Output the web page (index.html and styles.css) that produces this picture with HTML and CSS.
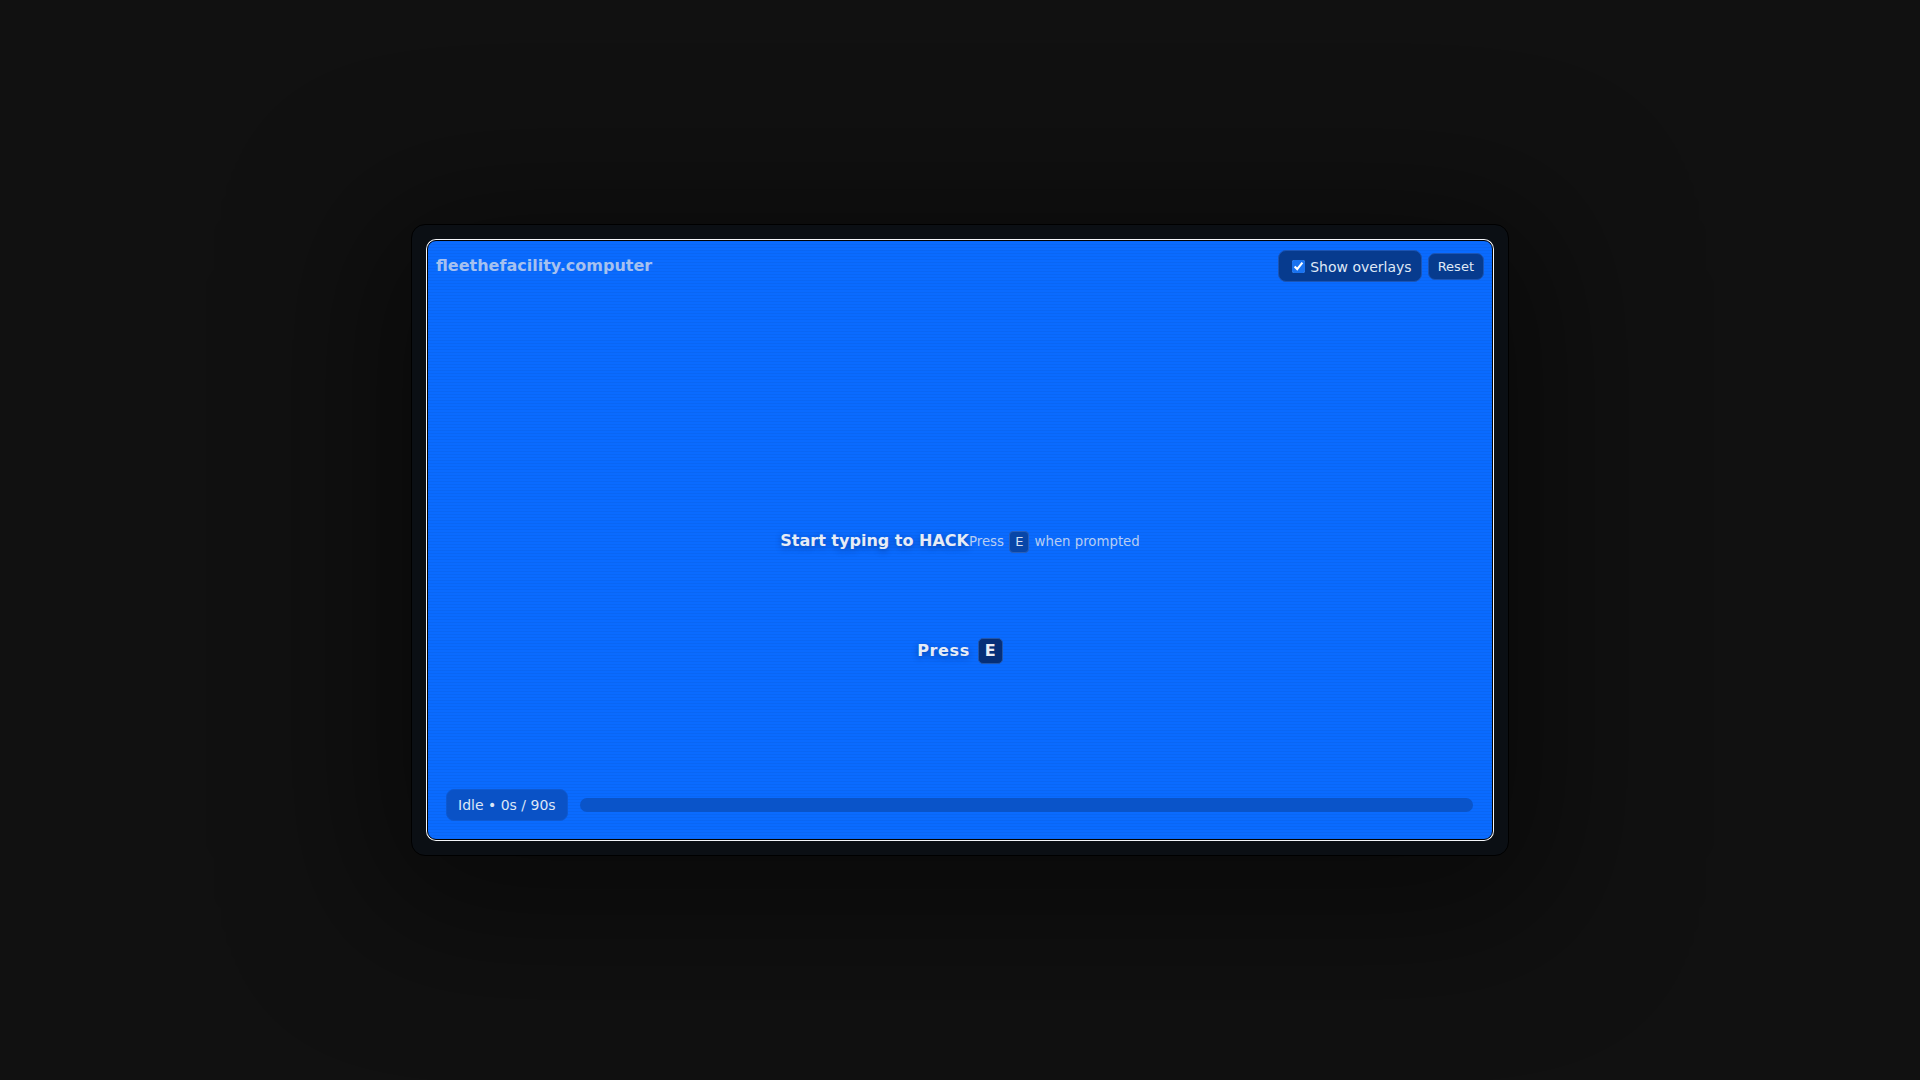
FILE: index.html
```html
<!DOCTYPE html>
<html lang="en">
<head>
<meta charset="utf-8">
<title>fleethefacility.computer</title>
<link rel="stylesheet" href="styles.css">
</head>
<body>
<div class="stage">
  <div class="frame">
    <div class="screen">
      <div class="hint">
        <span class="hint-title">Start typing to HACK</span>
        <span class="hint-sub">Press <kbd class="key-sm">E</kbd> when prompted</span>
      </div>
      <div class="prompt">
        <span class="prompt-label">Press</span>
        <kbd class="key-lg">E</kbd>
      </div>

      <header class="hud-top">
        <div class="brand">fleethefacility.computer</div>
        <div class="controls">
          <label class="toggle"><input type="checkbox" checked> <span class="toggle-text">Show overlays</span></label>
          <button class="btn" type="button">Reset</button>
        </div>
      </header>

      <footer class="hud-bottom">
        <div class="status">Idle • 0s / 90s</div>
        <div class="track"><div class="fill" style="width:0%"></div></div>
      </footer>
    </div>
  </div>
</div>
</body>
</html>
```
FILE: styles.css
```css
* { box-sizing: border-box; }

html, body {
  margin: 0;
  padding: 0;
  height: 100%;
}

body {
  background: #111111;
  font-family: "DejaVu Sans", "Liberation Sans", sans-serif;
  color: #e8eef8;
}

.stage {
  height: 100vh;
  display: flex;
  align-items: center;
  justify-content: center;
}

.frame {
  width: 1098px;
  height: 632px;
  padding: 15px;
  background: #0b0f14;
  border: 1px solid #000;
  border-radius: 14px;
  box-shadow: 0 24px 150px 40px rgba(0, 0, 0, 0.45);
}

.screen {
  position: relative;
  width: 100%;
  height: 100%;
  border: 1px solid #000;
  border-radius: 9px;
  box-shadow: 0 0 0 1px #f4f6fa;
  background-color: #0a6bff;
  background-image: repeating-linear-gradient(
    0deg,
    rgba(0, 0, 0, 0.045) 0px,
    rgba(0, 0, 0, 0.045) 1px,
    transparent 1px,
    transparent 3px
  );
  display: grid;
  grid-template-rows: 1fr auto 1fr;
  justify-items: center;
  overflow: hidden;
}

.hint {
  grid-row: 2;
  display: flex;
  align-items: center;
}

.hint-title {
  font-weight: bold;
  font-size: 16px;
  color: #e6ecf6;
  text-shadow: 0 2px 6px rgba(0, 20, 70, 0.45);
}

.hint-sub {
  font-size: 13.3px;
  color: #b7cdf2;
  padding-top: 3px;
}

.key-sm {
  display: inline-block;
  font-family: inherit;
  font-size: 13px;
  line-height: 20px;
  padding: 0 5px;
  margin: 0 1px;
  background: #0846a8;
  border: 1px solid #2a5fb8;
  border-radius: 4px;
  color: #d3e0f5;
}

.prompt {
  grid-row: 3;
  align-self: start;
  margin-top: 85px;
  display: flex;
  align-items: center;
  gap: 8px;
}

.prompt-label {
  font-weight: bold;
  font-size: 16px;
  letter-spacing: 0.6px;
  color: #e6ecf6;
  text-shadow: 0 2px 6px rgba(0, 20, 70, 0.45);
}

.key-lg {
  display: inline-block;
  font-family: inherit;
  font-weight: bold;
  font-size: 16px;
  line-height: 24px;
  padding: 0 6px;
  background: #052f78;
  border: 1px solid #2456a8;
  border-radius: 5px;
  color: #e8edf6;
}

.hud-top {
  position: absolute;
  top: 0;
  left: 0;
  right: 0;
  padding: 9px 8px 0 8px;
  display: flex;
  align-items: center;
  justify-content: space-between;
}

.brand {
  font-weight: bold;
  font-size: 16px;
  color: #a6c1ef;
  margin-top: -1px;
}

.controls {
  display: flex;
  align-items: center;
  gap: 6px;
}

.toggle {
  display: flex;
  align-items: center;
  height: 32px;
  padding: 0 9px 0 12px;
  background: #073b8e;
  border: 1px solid #1b54b4;
  border-radius: 8px;
  font-size: 14px;
  color: #dfe8f6;
}

.toggle input {
  width: 13px;
  height: 13px;
  margin: 0 5px 0 1px;
  accent-color: #1a73f0;
}

.toggle-text {
  padding-top: 2px;
}

.btn {
  height: 27px;
  padding: 0 9px;
  background: #073b8e;
  border: 1px solid #1b54b4;
  border-radius: 7px;
  font-family: inherit;
  font-size: 13px;
  color: #dfe8f6;
}

.hud-bottom {
  position: absolute;
  left: 18px;
  right: 19px;
  bottom: 18px;
  display: flex;
  align-items: center;
  gap: 12px;
}

.status {
  height: 32px;
  padding: 0 11px;
  display: flex;
  align-items: center;
  background: #0a52c6;
  border: 1px solid #0d59d2;
  border-radius: 8px;
  font-size: 14px;
  color: #dce6f6;
}

.track {
  flex: 1;
  height: 14px;
  border-radius: 7px;
  background: #0a54c9;
  overflow: hidden;
}

.fill {
  height: 100%;
  background: #2b8aff;
}
```
